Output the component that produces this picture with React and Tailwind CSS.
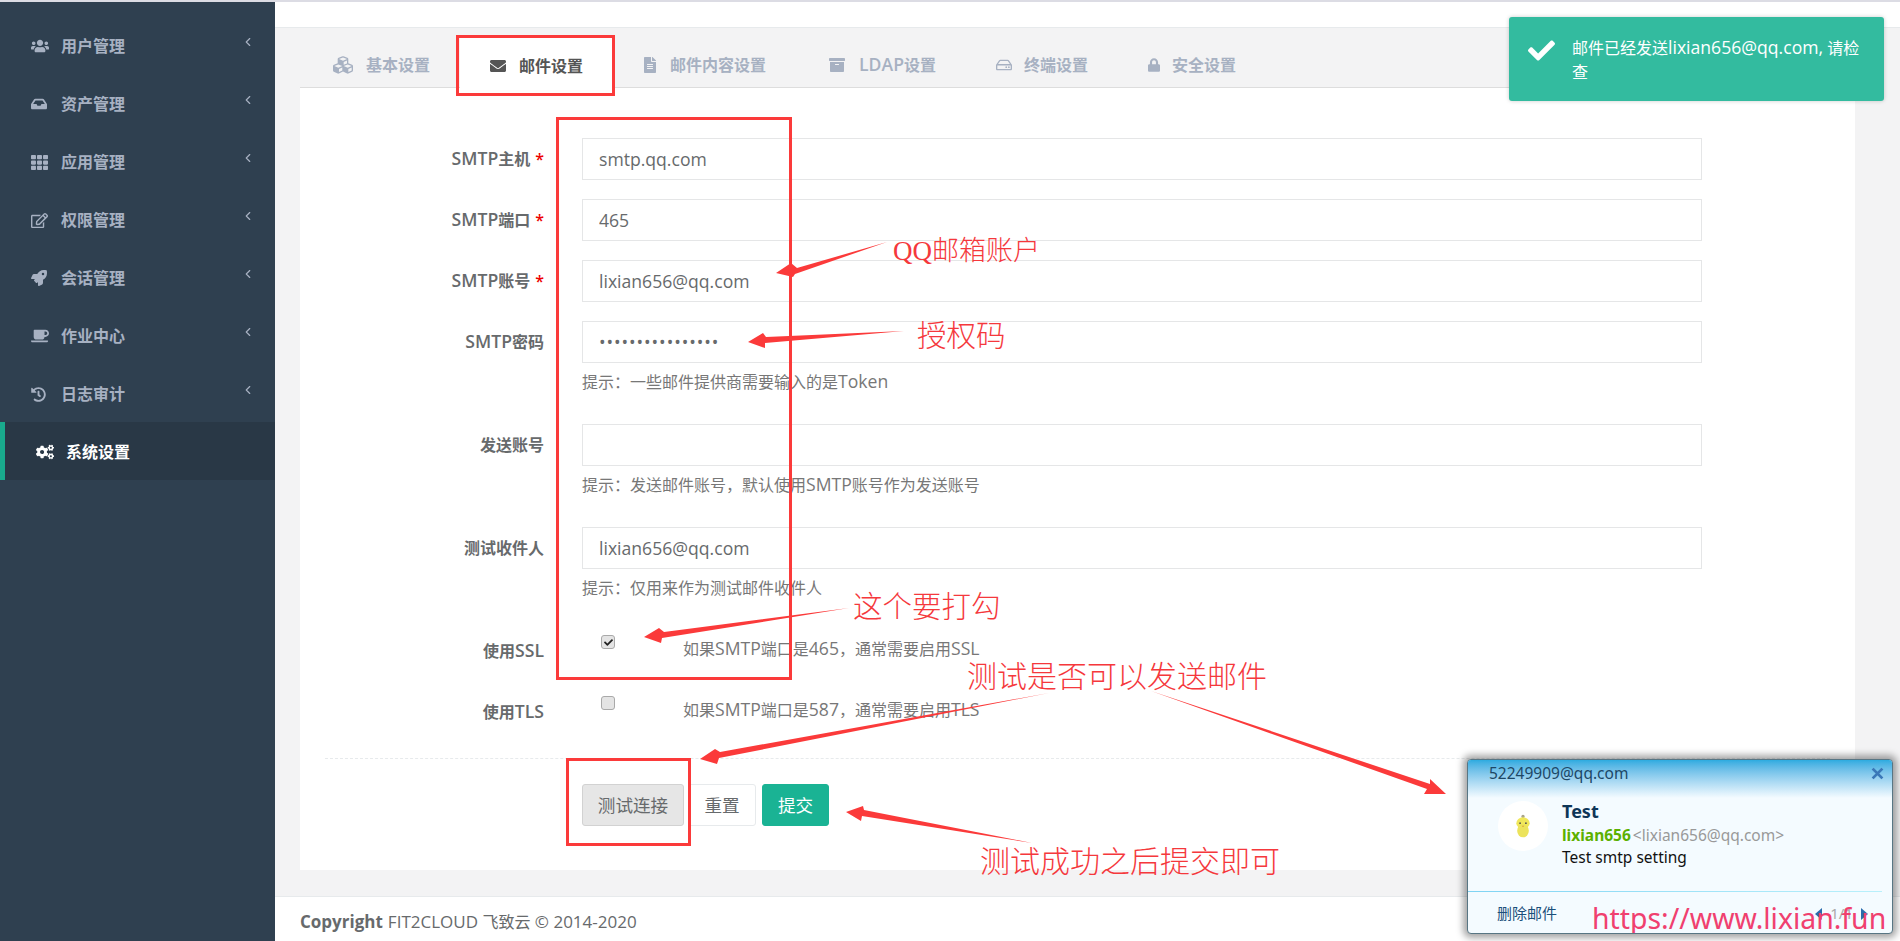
import React from 'react';
import { ChevronLeft } from 'lucide-react';
import { FaUsers, FaInbox, FaTh, FaRegEdit, FaRocket, FaCoffee, FaHistory, FaCogs, FaCubes, FaEnvelope, FaFileAlt, FaArchive, FaRegHdd, FaLock, FaCheck } from 'react-icons/fa';

// latin runs in the reference are a notch bigger than the CJK around them
const En = ({ children }) => <span className="text-[17.6px] leading-none">{children}</span>;

const menu = [
  { label: '用户管理', icon: <FaUsers className="w-[18px] h-[18px]" /> },
  { label: '资产管理', icon: <FaInbox className="w-[16px] h-[16px]" /> },
  { label: '应用管理', icon: <FaTh className="w-[17px] h-[17px]" /> },
  { label: '权限管理', icon: <FaRegEdit className="w-[17px] h-[17px]" /> },
  { label: '会话管理', icon: <FaRocket className="w-[16px] h-[16px]" /> },
  { label: '作业中心', icon: <FaCoffee className="w-[18px] h-[18px]" /> },
  { label: '日志审计', icon: <FaHistory className="w-[15px] h-[15px]" /> },
];

const tabs = [
  { label: '基本设置', icon: <FaCubes className="w-[20px] h-[20px]" />, gap: 'gap-[13px]' },
  { label: '邮件设置', icon: <FaEnvelope className="w-[16px] h-[16px]" />, gap: 'gap-[13px]', active: true },
  { label: '邮件内容设置', icon: <FaFileAlt className="w-[14px] h-[16px]" />, gap: 'gap-[13px]' },
  { label: <><En>LDAP</En>设置</>, key: 'ldap', icon: <FaArchive className="w-[16px] h-[16px]" />, gap: 'gap-[14px] ml-[3px]' },
  { label: '终端设置', icon: <FaRegHdd className="w-[16px] h-[16px]" />, gap: 'gap-[12px]' },
  { label: '安全设置', icon: <FaLock className="w-[12px] h-[14px]" />, gap: 'gap-[12px]' },
];

const arrows = [
  '887,242 797,268 791,263 776,273 793,277 795,274',
  '904,331 766,337 763,333 748,342 765,348 765,343',
  '849,608 664,632 659,628 644,637 661,643 662,638',
  '1049,693 720,752 715,749 700,759 717,764 719,758',
  '1151,691 1430,784 1430,779 1446,794 1424,794 1427,789',
  '1032,843 864,810 863,806 846,812 861,821 862,816',
];

const notes = [
  { text: 'QQ邮箱账户', cls: 'left-[893px] top-[236px] text-[27px]' },
  { text: '授权码', cls: 'left-[917px] top-[321px] text-[29.5px]' },
  { text: '这个要打勾', cls: 'left-[853px] top-[592px] text-[29.5px]' },
  { text: '测试是否可以发送邮件', cls: 'left-[967px] top-[662px] text-[30px]' },
  { text: '测试成功之后提交即可', cls: 'left-[980px] top-[847px] text-[30px]' },
];

function Field({ label, required, help, value, type = 'text' }) {
  return (
    <div className="flex mb-[19px]">
      <label className="w-[244px] shrink-0 h-[42px] pb-[1px] flex items-center justify-end font-semibold whitespace-nowrap">
        <span>{label}</span>
        {required && <span className="text-[#ed0000] ml-[5px]">*</span>}
      </label>
      <div className="ml-[38px] w-[1120px]">
        <input
          readOnly
          type={type}
          value={value}
          className={`block w-full h-[42px] border border-[#e5e6e7] bg-white px-[16px] outline-none text-[17.6px] text-[#676a6c] ${type === 'password' ? 'tracking-[0.9px]' : ''}`}
        />
        {help && <p className="mt-[7px] mb-[11px] h-[24px] leading-[24px] text-[#777777]">{help}</p>}
      </div>
    </div>
  );
}

function Toggle({ label, checked, help }) {
  return (
    <div className="flex h-[42px] mb-[19px]">
      <label className="w-[244px] shrink-0 h-[42px] flex items-center justify-end font-semibold"><span>{label}</span></label>
      <div className="ml-[38px] flex">
        <div className="w-[101px] pl-[19px] pt-[5px]">
          <span className="flex items-center justify-center w-[14px] h-[14px] rounded-[3px] border border-[#a9a9a9] bg-[#e4e4e4]">
            {checked && <FaCheck className="w-[9px] h-[9px] text-[#222222]" />}
          </span>
        </div>
        <p className="leading-[24px] pt-[7px] text-[#777777] whitespace-nowrap">{help}</p>
      </div>
    </div>
  );
}

function QQPopup() {
  return (
    <div className="absolute left-[1467px] top-[759px] w-[426px] h-[175px] rounded-[4px] border border-[#587684] bg-[#f4fbff] shadow-[0_0_7px_4px_rgba(0,0,0,0.35)] overflow-hidden font-['Noto_Sans','Noto_Sans_CJK_SC',sans-serif]">
      <div className="h-[38px] bg-gradient-to-b from-[#2cabe0] to-[#f4fbff] flex items-start justify-between pl-[21px] pr-[8px] pt-[2px]">
        <span className="text-[15.5px] text-[#1d4766]">52249909@qq.com</span>
        <svg viewBox="0 0 12 12" className="w-[13px] h-[13px] mt-[5px] text-[#3a78b8]">
          <path d="M1.5 1.5 L10.5 10.5 M10.5 1.5 L1.5 10.5" stroke="currentColor" strokeWidth="2.6" />
        </svg>
      </div>
      <div className="flex pl-[30px] pt-[3px]">
        <div className="w-[50px] h-[50px] rounded-full bg-white flex items-center justify-center">
          <svg viewBox="0 0 24 30" className="w-[20px] h-[27px]">
            <circle cx="12" cy="3" r="2" fill="#a9a58a" />
            <ellipse cx="12" cy="11" rx="8" ry="7" fill="#f0e75a" />
            <ellipse cx="12" cy="20" rx="7" ry="8" fill="#ece35c" />
            <circle cx="8.5" cy="11" r="1.1" fill="#555" />
            <circle cx="15.5" cy="11" r="1.1" fill="#555" />
            <path d="M10.5 14 L13.5 14 L12 16 Z" fill="#d9a12e" />
          </svg>
        </div>
        <div className="ml-[14px] -mt-[3px]">
          <div className="text-[18px] leading-[26px] font-bold text-[#0e3557]">Test</div>
          <div className="text-[15.5px] leading-[22px] whitespace-nowrap">
            <span className="font-bold text-[#5cb000]">lixian656</span>
            <span className="text-[#999999] ml-[2px]">&lt;lixian656@qq.com&gt;</span>
          </div>
          <div className="text-[15.5px] leading-[22px] text-[#111111]">Test smtp setting</div>
        </div>
      </div>
      <div className="mt-[23px] h-px mr-[10px] bg-gradient-to-r from-[#7fd3f3] to-[#b9f0fb]" />
      <div className="flex items-center justify-between h-[43px] pl-[29px] pr-[24px] text-[15px]">
        <span className="text-[#1b4f7a]">删除邮件</span>
        <div className="flex items-center gap-[8px] text-[#aaaaaa]">
          <span className="w-0 h-0 border-y-[6px] border-y-transparent border-r-[7px] border-r-[#2a6cad]" />
          <span>1/1</span>
          <span className="w-0 h-0 border-y-[6px] border-y-transparent border-l-[7px] border-l-[#2a6cad]" />
        </div>
      </div>
      <div className="absolute left-[124px] top-[138px] text-[28.4px] leading-[40px] text-[#f0406f] whitespace-nowrap">https://www.lixian.fun</div>
    </div>
  );
}

export default function App() {
  return (
    <div className="relative w-full h-[941px] overflow-hidden flex flex-col text-[16px] text-[#676a6c] font-['Open_Sans','Noto_Sans_CJK_SC',sans-serif]">
      <div className="h-[2px] shrink-0 bg-[#dcdce4]" />
      <div className="flex flex-1 min-h-0">
        <aside className="w-[275px] shrink-0 bg-[#2f4050] pt-[14px] font-semibold text-[#a7b1c2]">
          {menu.map((item) => (
            <div key={item.label} className="flex items-center h-[58px] pt-[2px] pl-[31px] pr-[20px]">
              <span className="w-[30px] flex items-center">{item.icon}</span>
              <span className="flex-1">{item.label}</span>
              <ChevronLeft className="w-[14px] h-[14px] -mt-[8px]" />
            </div>
          ))}
          <div className="flex items-center h-[58px] pt-[2px] pl-[31px] bg-[#293846] border-l-[5px] border-[#19aa8d] text-white">
            <span className="w-[30px] flex items-center"><FaCogs className="w-[18px] h-[18px]" /></span>
            <span>系统设置</span>
          </div>
        </aside>

        <main className="flex-1 min-w-0 flex flex-col bg-[#f3f3f4]">
          <div className="h-[26px] shrink-0 bg-white border-b border-[#e7eaec]" />
          <div className="flex-1 pl-[25px] pr-[45px]">
            <div className="h-[60px] flex items-end pl-[3px] border-b border-[#dddddd] font-semibold text-[#a7b1c2]">
              {tabs.map((tab) => (
                <div
                  key={tab.key || tab.label}
                  className={`flex items-center ${tab.gap} px-[30px] pt-[17px] pb-[10px] h-[51px] leading-[24px] ${tab.active ? 'bg-white text-[#555555] -mb-px' : ''}`}
                >
                  {tab.icon}
                  <span>{tab.label}</span>
                </div>
              ))}
            </div>
            <div className="bg-white pt-[50px] pb-[44px]">
              <Field label={<><En>SMTP</En>主机</>} required value="smtp.qq.com" />
              <Field label={<><En>SMTP</En>端口</>} required value="465" />
              <Field label={<><En>SMTP</En>账号</>} required value="lixian656@qq.com" />
              <Field label={<><En>SMTP</En>密码</>} type="password" value="1234567890123456" help={<>提示：一些邮件提供商需要输入的是<En>Token</En></>} />
              <Field label="发送账号" value="" help={<>提示：发送邮件账号，默认使用<En>SMTP</En>账号作为发送账号</>} />
              <Field label="测试收件人" value="lixian656@qq.com" help="提示：仅用来作为测试邮件收件人" />
              <Toggle label={<>使用<En>SSL</En></>} checked help={<>如果<En>SMTP</En>端口是<En>465</En>，通常需要启用<En>SSL</En></>} />
              <Toggle label={<>使用<En>TLS</En></>} help={<>如果<En>SMTP</En>端口是<En>587</En>，通常需要启用<En>TLS</En></>} />
              <div className="mx-[25px] mt-[25px] mb-[25px] border-t border-dashed border-[#e7eaec]" />
              <div className="flex ml-[282px] gap-[4px] text-[17.6px]">
                <button className="h-[42px] w-[102px] rounded-[3px] border border-[#d2d2d2] bg-[#e6e6e6] text-[#676a6c]">测试连接</button>
                <button className="h-[42px] w-[68px] rounded-[3px] border border-[#e7eaec] bg-white text-[#676a6c]">重置</button>
                <button className="h-[42px] w-[67px] ml-[2px] rounded-[3px] border border-[#1ab394] bg-[#1ab394] text-white">提交</button>
              </div>
            </div>
          </div>
          <footer className="h-[45px] shrink-0 bg-white border-t border-[#e7eaec] flex items-center pl-[25px] pt-[6px] text-[17px]">
            <strong className="font-bold">Copyright</strong>
            <span className="ml-[5px]">FIT2CLOUD <span className="text-[16px]">飞致云</span> © 2014-2020</span>
          </footer>
        </main>
      </div>

      <div className="absolute left-[1509px] top-[17px] w-[375px] h-[84px] rounded-[3px] bg-[#33bb9f] text-white flex shadow-[0_0_4px_rgba(0,0,0,0.2)]">
        <FaCheck className="w-[27px] h-[27px] ml-[19px] mt-[20px] shrink-0" />
        <p className="ml-[17px] mt-[19px] w-[290px] leading-[24px] break-all">邮件已经发送<En>lixian656@qq.com,</En> 请检查</p>
      </div>

      <div className="absolute left-[456px] top-[35px] w-[159px] h-[61px] border-[3px] border-[#fb3a3a]" />
      <div className="absolute left-[556px] top-[117px] w-[236px] h-[563px] border-[3px] border-[#fb3a3a]" />
      <div className="absolute left-[566px] top-[758px] w-[125px] h-[88px] border-[3px] border-[#fb3a3a]" />

      <QQPopup />

      <svg viewBox="0 0 1900 941" className="absolute left-0 top-0 w-[1900px] h-[941px] pointer-events-none">
        {arrows.map((points) => <polygon key={points} points={points} fill="#fb3a3a" />)}
      </svg>

      {notes.map((note) => (
        <div key={note.text} className={`absolute ${note.cls} leading-[30px] font-light whitespace-nowrap text-[#f5383c] font-['Liberation_Serif','Noto_Sans_CJK_SC',serif]`}>
          {note.text}
        </div>
      ))}
    </div>
  );
}
